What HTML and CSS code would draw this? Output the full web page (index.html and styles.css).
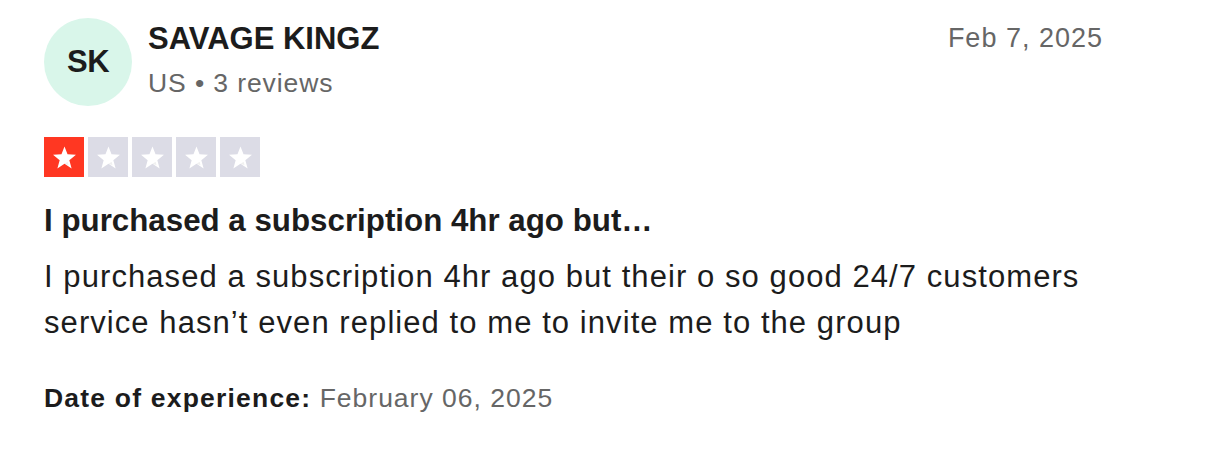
FILE: index.html
```html
<!DOCTYPE html>
<html lang="en">
<head>
  <meta charset="UTF-8">
  <title>Review</title>
  <link rel="stylesheet" href="styles.css">
</head>
<body>

  <article class="review">
    <header class="review-head">
      <div class="avatar">SK</div>
      <div class="author">
        <div class="author-name">SAVAGE KINGZ</div>
        <div class="author-meta">US &bull; 3 reviews</div>
      </div>
      <time class="review-date">Feb 7, 2025</time>
    </header>

    <!-- rated 1 of 5 -->
    <div class="stars">
      <span class="star on"><svg viewBox="0 0 24 24"><path d="M12 2.8l2.5 6.6 7 .4-5.5 4.4 1.9 6.8L12 17.1 6.1 21l1.9-6.8L2.5 9.8l7-.4z"/><path class="shade" d="M14.6 15.5l.8 2.9L12 17.1z"/></svg></span>
      <span class="star"><svg viewBox="0 0 24 24"><path d="M12 2.8l2.5 6.6 7 .4-5.5 4.4 1.9 6.8L12 17.1 6.1 21l1.9-6.8L2.5 9.8l7-.4z"/><path class="shade" d="M14.6 15.5l.8 2.9L12 17.1z"/></svg></span>
      <span class="star"><svg viewBox="0 0 24 24"><path d="M12 2.8l2.5 6.6 7 .4-5.5 4.4 1.9 6.8L12 17.1 6.1 21l1.9-6.8L2.5 9.8l7-.4z"/><path class="shade" d="M14.6 15.5l.8 2.9L12 17.1z"/></svg></span>
      <span class="star"><svg viewBox="0 0 24 24"><path d="M12 2.8l2.5 6.6 7 .4-5.5 4.4 1.9 6.8L12 17.1 6.1 21l1.9-6.8L2.5 9.8l7-.4z"/><path class="shade" d="M14.6 15.5l.8 2.9L12 17.1z"/></svg></span>
      <span class="star"><svg viewBox="0 0 24 24"><path d="M12 2.8l2.5 6.6 7 .4-5.5 4.4 1.9 6.8L12 17.1 6.1 21l1.9-6.8L2.5 9.8l7-.4z"/><path class="shade" d="M14.6 15.5l.8 2.9L12 17.1z"/></svg></span>
    </div>

    <h2 class="review-title">I purchased a subscription 4hr ago but…</h2>
    <p class="review-text">I purchased a subscription 4hr ago but their o so good 24/7 customers service hasn’t even replied to me to invite me to the group</p>

    <p class="experience"><strong>Date of experience:</strong> February 06, 2025</p>
  </article>

</body>
</html>
```

FILE: styles.css
```css
body {
  margin: 0;
  background: #ffffff;
  font-family: "Liberation Sans", Arial, sans-serif;
  color: #1c1c1c;
}
.review {
  width: 1058px;
  padding: 18px 0 0 44px;
}
.review-head {
  display: flex;
  align-items: flex-start;
}
.avatar {
  width: 88px;
  height: 88px;
  border-radius: 50%;
  background: #d9f6ea;
  color: #1c1c1c;
  font-weight: bold;
  font-size: 31px;
  letter-spacing: -0.5px;
  display: flex;
  align-items: center;
  justify-content: center;
  flex-shrink: 0;
}
.author {
  flex: 1;
  margin-left: 16px;
  padding-top: 3px;
}
.author-name {
  font-size: 31px;
  font-weight: bold;
  line-height: 36px;
}
.author-meta {
  font-size: 26.5px;
  letter-spacing: 0.9px;
  color: #666666;
  line-height: 36px;
  margin-top: 8px;
}
.review-date {
  font-size: 27px;
  letter-spacing: 1px;
  color: #666666;
  line-height: 36px;
  padding-top: 2px;
  margin-right: -1px;
}
.stars {
  display: flex;
  gap: 4px;
  margin-top: 31px;
}
.star {
  width: 40px;
  height: 40px;
  background: #dcdce6;
  display: flex;
  align-items: center;
  justify-content: center;
}
.star.on {
  background: #ff3722;
}
.star svg {
  width: 29px;
  height: 29px;
  fill: #ffffff;
}
.star .shade {
  fill: #000000;
  fill-opacity: 0.06;
}
.review-title {
  font-size: 31.3px;
  line-height: 38px;
  margin: 25px 0 0;
}
.review-text {
  font-size: 31px;
  letter-spacing: 1.07px;
  line-height: 46px;
  margin: 14px 0 0;
}
.experience {
  font-size: 26.5px;
  letter-spacing: 1px;
  line-height: 34px;
  color: #666666;
  margin: 35px 0 0;
}
.experience strong {
  color: #1c1c1c;
  letter-spacing: 1.2px;
}
```
